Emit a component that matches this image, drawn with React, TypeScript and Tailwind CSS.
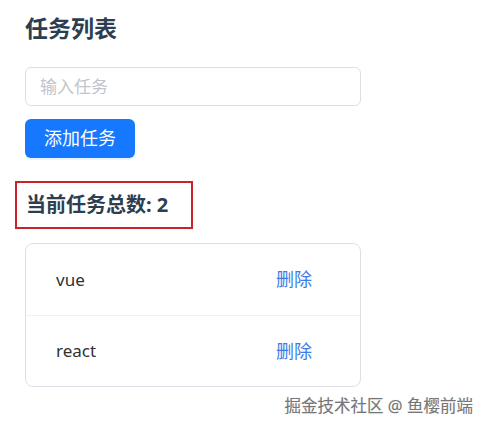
const tasks = ["vue", "react"];

export default function App() {
  return (
    <div
      className="relative w-[486px] h-[428px] bg-white text-[#2c3e50]"
      style={{ fontFamily: '"Noto Sans", "Noto Sans CJK SC", sans-serif' }}
    >
      <div className="px-[25px] pt-[12px] flex flex-col">
        <h1 className="text-[23px] font-bold leading-[32px]">任务列表</h1>

        <input
          className="mt-[23px] w-[336px] h-[39px] rounded-[6px] border border-[#dcdfe6] px-[14px] text-[17px] placeholder:text-[#c0c4cc] outline-none"
          placeholder="输入任务"
        />

        <button className="mt-[13px] w-[110px] h-[39px] rounded-[6px] bg-[#1677ff] text-white text-[18px] flex items-center justify-center shadow-[0_2px_0_rgba(5,145,255,0.1)]">
          添加任务
        </button>

        <div className="mt-[23px] -ml-[10px] w-[178px] h-[48px] border-2 border-[#c8232c] flex items-center pl-[9px]">
          <span className="text-[20px] font-bold leading-none">当前任务总数: 2</span>
        </div>

        <ul className="mt-[14px] w-[336px] rounded-[8px] border border-[#dcdfe6]">
          {tasks.map((t, i) => (
            <li
              key={t}
              className={`h-[71px] flex items-center justify-between pl-[30px] pr-[48px] text-[17px] ${
                i > 0 ? "border-t border-[#f0f0f0]" : ""
              }`}
            >
              <span className="text-[#303133]">{t}</span>
              <span className="text-[#3a7de8] text-[18px]">删除</span>
            </li>
          ))}
        </ul>
      </div>

      <div className="absolute right-[13px] top-[394px] text-[16.5px] text-[#777] [text-shadow:1px_1px_0_#fff,0_0_1px_#bbb]">
        掘金技术社区 @ 鱼樱前端
      </div>
    </div>
  );
}
